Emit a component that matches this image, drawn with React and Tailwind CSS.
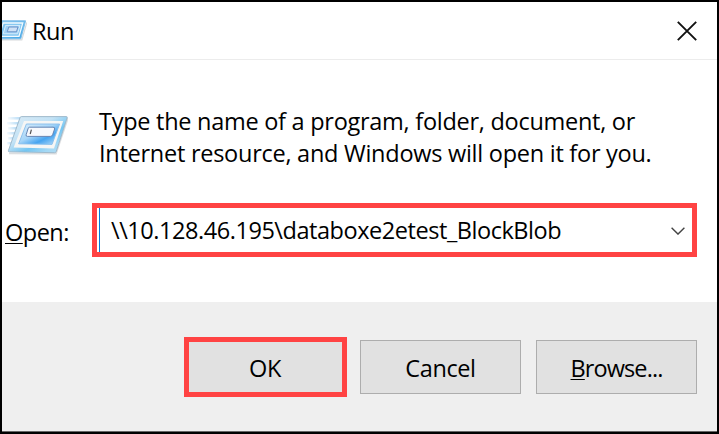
function RunIcon({ className }) {
  return (
    <svg className={className} viewBox="0 0 62 40" fill="none">
      <defs>
        <linearGradient id="runFrame" x1="0" y1="0" x2="1" y2="1">
          <stop offset="0" stopColor="#dbecf7" />
          <stop offset="0.4" stopColor="#c3e2f5" />
          <stop offset="0.62" stopColor="#74c6f2" />
          <stop offset="0.8" stopColor="#a5d9f5" />
          <stop offset="1" stopColor="#b5def5" />
        </linearGradient>
        <linearGradient id="runPanel" x1="0" y1="0" x2="1" y2="1">
          <stop offset="0" stopColor="#dbeefc" />
          <stop offset="0.45" stopColor="#a6d5f8" />
          <stop offset="0.68" stopColor="#46a4f0" />
          <stop offset="1" stopColor="#c4e4fa" />
        </linearGradient>
        <linearGradient id="runTrail" x1="0" y1="0" x2="1" y2="0">
          <stop offset="0" stopColor="#b9dcf5" stopOpacity="0.15" />
          <stop offset="1" stopColor="#b4dbf7" />
        </linearGradient>
      </defs>
      <g fill="url(#runTrail)">
        <rect x="2" y="1" width="13" height="2.5" />
        <rect x="1" y="6" width="12" height="2.5" />
        <rect x="2" y="11" width="9" height="2.5" />
        <rect x="1" y="16" width="9" height="2.5" />
        <rect x="2" y="21" width="6" height="2.5" />
        <rect x="1" y="26" width="5" height="2.5" />
      </g>
      <path d="M3 37.4 L50 37.8 L62 2" stroke="#8a9299" strokeOpacity="0.3" strokeWidth="1.6" />
      <path d="M15.4.6H60.3Q61.5.6 61.2 1.7L50.2 35.6Q49.8 36.8 48.6 36.7L3.4 35.8Q2 35.8 2.4 34.6L14 1.7Q14.4.6 15.4.6Z" fill="url(#runFrame)" stroke="#9bb4c6" strokeWidth="0.9" />
      <path d="M18 5H57.2L48 32.4L7.6 31.6Z" fill="#f6f6f5" />
      <path d="M20.4 8H53.6L46 28.4L12.6 27.8Z" fill="url(#runPanel)" stroke="#86bdec" strokeWidth="0.9" />
      <path d="M23.6 11.2H47Q49.2 11.2 48.6 13L46.6 18.8Q46 20.4 44.4 20.4H21.4Q19.6 20.4 20.2 18.6L22 12.8Q22.4 11.2 23.6 11.2Z" fill="#f7f9fd" stroke="#6684b2" strokeWidth="1" />
      <path d="M25.4 13.6L24.2 18" stroke="#555" strokeWidth="1.2" />
    </svg>
  );
}

function SmallRunIcon({ className }) {
  return (
    <svg className={className} viewBox="0 0 25 22" fill="none">
      <defs>
        <linearGradient id="smallFrame" x1="0" y1="0" x2="1" y2="1">
          <stop offset="0" stopColor="#8fcaf0" />
          <stop offset="1" stopColor="#3fa6e6" />
        </linearGradient>
      </defs>
      <path d="M-4 19.9H19.8L24.8 2.4" stroke="#8a9299" strokeOpacity="0.35" strokeWidth="1.2" />
      <path d="M-1 .8H23.6L18.8 18.8H-6Z" fill="url(#smallFrame)" stroke="#7fbde8" strokeWidth="1" />
      <path d="M1.2 3H20.8L17 16.4H-3Z" fill="#7fc4f0" stroke="#f2fafe" strokeWidth="1.3" />
      <path d="M3.6 5.4H18L15.6 13.8H1.2Z" fill="#9ed0f5" stroke="#d9eefb" strokeWidth="1" />
      <path d="M6.8 7H16L14.4 11.8H5.2Z" fill="#cfe1f6" stroke="#6b93c8" strokeWidth="1" />
    </svg>
  );
}

export default function App() {
  return (
    <main className="flex h-[434px] w-[719px] flex-col overflow-hidden border-x-2 border-t-2 border-b-[2px] border-black bg-white font-['Open_Sans',sans-serif] text-[23.5px] leading-8 text-black">
      <header className="flex h-[58px] shrink-0 items-center border-b border-[#ececec]">
        <SmallRunIcon className="h-[22px] w-[25px]" />
        <h1 className="ml-[5px] mt-[1px] tracking-[-0.4px]">Run</h1>
        <svg className="ml-auto mr-[20px] h-[20px] w-[20px]" viewBox="0 0 20 20" fill="none">
          <path d="M.8.8L19.2 19.2M19.2.8L.8 19.2" stroke="#111" strokeWidth="1.9" />
        </svg>
      </header>
      <section className="flex h-[242px] shrink-0 flex-col">
        <div className="flex h-[143px] pt-[45px]">
          <RunIcon className="mt-[11px] ml-[4px] h-[40px] w-[62px] shrink-0" />
          <p className="ml-[31px] whitespace-nowrap">
            <span className="block tracking-[-0.27px]">Type the name of a program, folder, document, or</span>
            <span className="block tracking-[-0.26px]">Internet resource, and Windows will open it for you.</span>
          </p>
        </div>
        <div className="flex h-[54px]">
          <label className="w-[90px] pl-[3px] pt-[13px] tracking-[-0.5px]">
            <span className="underline decoration-1 underline-offset-2">O</span>pen:
          </label>
          <div className="flex w-[605px] border-[5px] border-[#ff4343] pl-[2px]">
            <div className="flex grow items-center border-l border-[#0078d7] pl-[11px] pr-[7px]">
              <span className="whitespace-nowrap tracking-[-0.45px]">\\10.128.46.195\databoxe2etest_BlockBlob</span>
              <svg className="ml-auto mt-[1px] h-[8px] w-[14px]" viewBox="0 0 14 8" fill="none">
                <path d="M.6.8L7 7.1L13.4.8" stroke="#444" strokeWidth="1.4" />
              </svg>
            </div>
          </div>
        </div>
      </section>
      <footer className="flex h-[130px] shrink-0 border-b border-[#666] bg-[#efefef] pl-[182px] pt-[35px]">
        <button className="flex h-[60px] w-[163px] items-center justify-center border-[5px] border-[#ff4343] bg-[#e1e1e1] pr-[1px] pt-[2px]">
          <span className="tracking-[-0.3px]">OK</span>
        </button>
        <button className="ml-[13px] mt-[3px] flex h-[54px] w-[161px] items-center justify-center border border-[#adadad] bg-[#e1e1e1] pt-[2px]">
          <span className="tracking-[-0.4px]">Cancel</span>
        </button>
        <button className="ml-[15px] mt-[3px] flex h-[54px] w-[161px] items-center justify-center border border-[#adadad] bg-[#e1e1e1] pt-[2px]">
          <span className="tracking-[-0.9px]">
            <span className="underline decoration-1 underline-offset-2">B</span>rowse...
          </span>
        </button>
      </footer>
    </main>
  );
}
